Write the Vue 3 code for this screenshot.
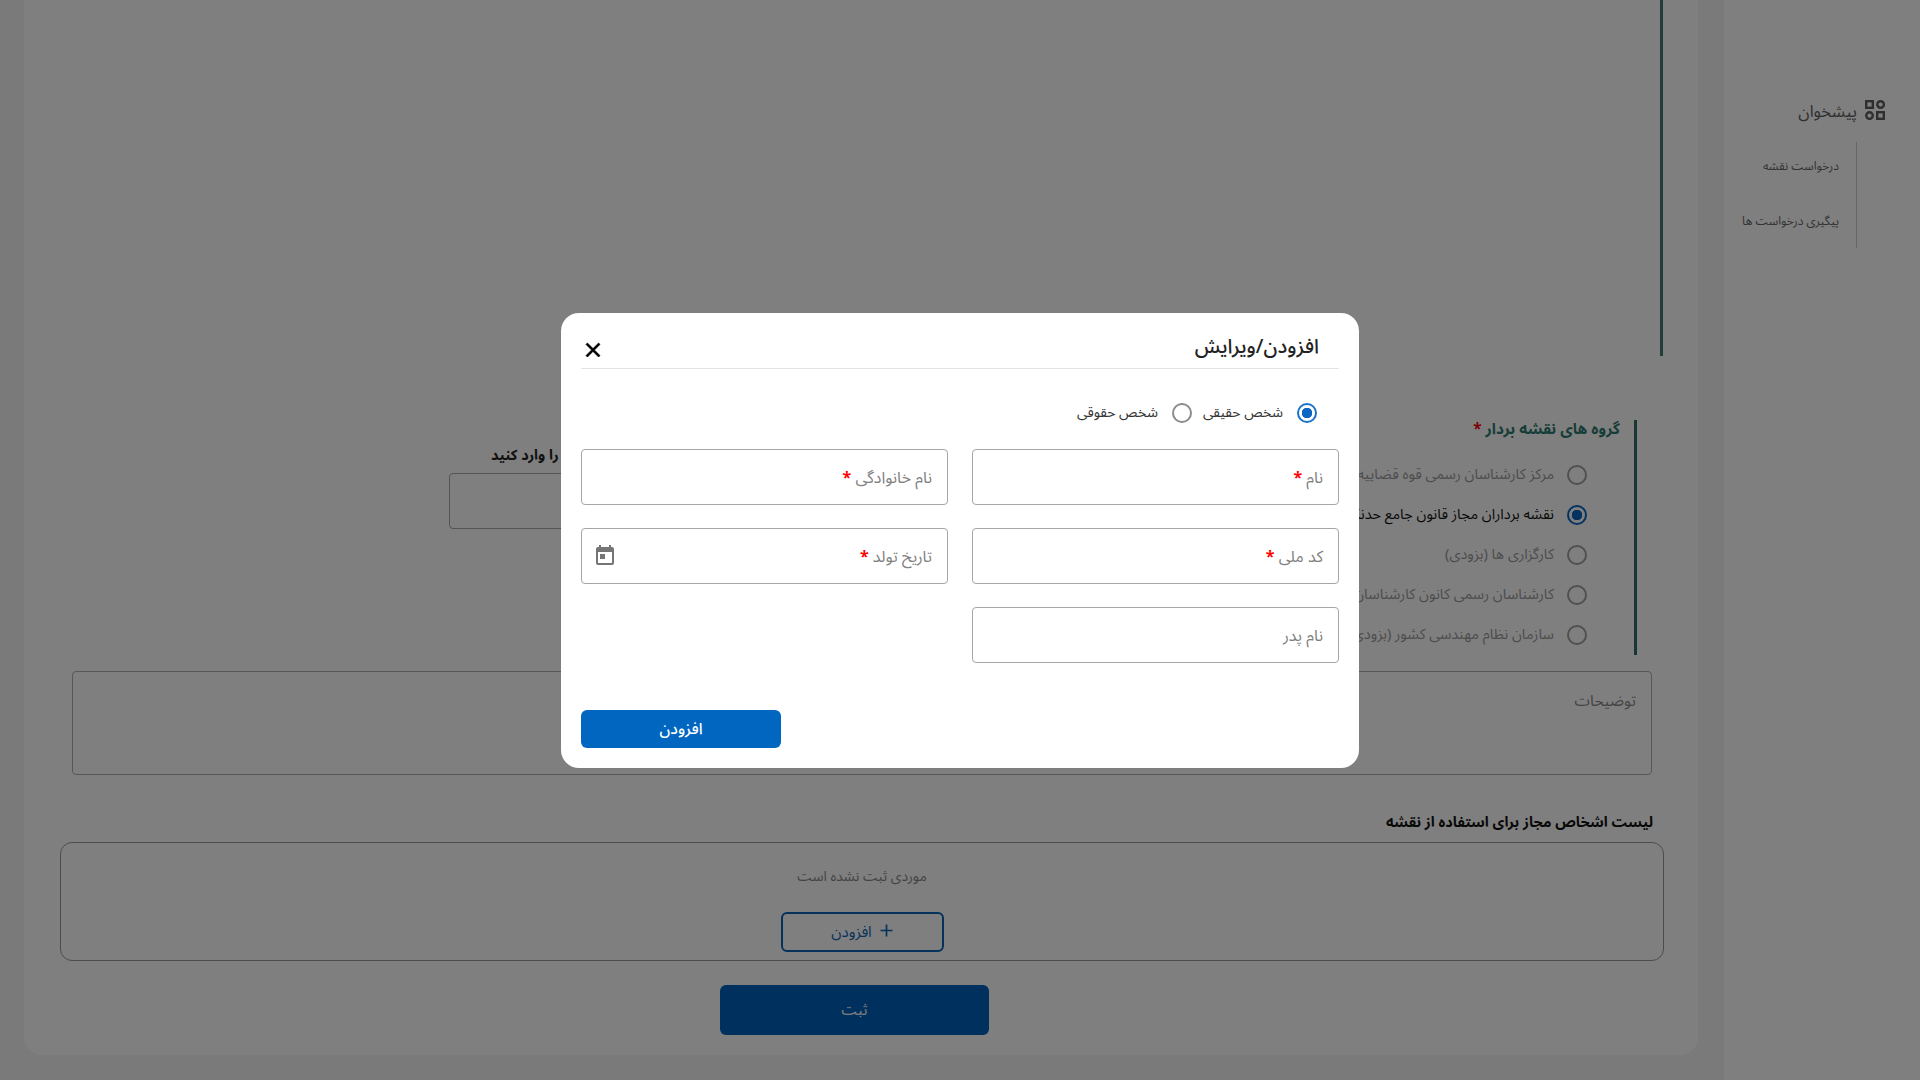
<template>
  <div class="page" dir="rtl">
    <aside class="sidebar">
      <div class="brand">
        <svg class="brand__icon" viewBox="0 0 20 20" width="20" height="20" fill="none" stroke="currentColor" stroke-width="2.4">
          <rect x="1.2" y="1.2" width="6.6" height="6.6" />
          <circle cx="15.6" cy="4.5" r="3.3" />
          <circle cx="4.5" cy="15.6" r="3.3" />
          <rect x="12.2" y="12.2" width="6.6" height="6.6" />
        </svg>
        <span class="brand__text">پیشخوان</span>
      </div>
      <nav class="submenu">
        <a v-for="item in menuItems" :key="item" class="submenu__item">{{ item }}</a>
      </nav>
    </aside>

    <main class="card">
      <div class="map-area"></div>

      <div class="form-row">
        <section class="groups">
          <h3 class="groups__title">گروه های نقشه بردار <em>*</em></h3>
          <div
            v-for="group in groups"
            :key="group.label"
            class="group"
            :class="{ 'group--active': group.active }"
          >
            <span class="radio" :class="{ 'radio--on': group.active }"></span>
            <span class="group__text">{{ group.label }}</span>
          </div>
        </section>
        <div class="code-field">
          <label class="code-field__label">شماره پرونده کار را وارد کنید</label>
          <div class="code-field__box"></div>
        </div>
      </div>

      <div class="notes">توضیحات</div>

      <h3 class="list-title">لیست اشخاص مجاز برای استفاده از نقشه</h3>
      <div class="list-box">
        <p class="list-box__empty">موردی ثبت نشده است</p>
        <button class="btn-outline">
          <svg viewBox="0 0 14 14" width="13" height="13" fill="none" stroke="currentColor" stroke-width="1.8">
            <path d="M7 0.5v13M0.5 7h13" />
          </svg>
          افزودن
        </button>
      </div>

      <button class="btn-submit">ثبت</button>
    </main>

    <div class="overlay">
      <div class="dialog">
        <header class="dialog__head">
          <h2>افزودن/ویرایش</h2>
          <svg class="dialog__close" viewBox="0 0 24 24" width="24" height="24" fill="#000" stroke="#000" stroke-width="0.7">
            <path d="M19 6.41 17.59 5 12 10.59 6.41 5 5 6.41 10.59 12 5 17.59 6.41 19 12 13.41 17.59 19 19 17.59 13.41 12z" />
          </svg>
        </header>

        <div class="person-type">
          <span class="radio radio--on radio--bright"></span>
          <span class="person-type__text">شخص حقیقی</span>
          <span class="radio radio--light"></span>
          <span class="person-type__text">شخص حقوقی</span>
        </div>

        <div class="fields">
          <div v-for="field in fields" :key="field.label" class="field" :class="{ 'field--empty': field.empty }">
            <template v-if="!field.empty">
              <span class="field__label">{{ field.label }} <em v-if="field.required">*</em></span>
              <svg v-if="field.date" viewBox="0 0 24 24" width="24" height="24" fill="#757575">
                <path d="M19 3h-1V1h-2v2H8V1H6v2H5c-1.11 0-1.99.9-1.99 2L3 19c0 1.1.89 2 2 2h14c1.1 0 2-.9 2-2V5c0-1.1-.9-2-2-2zm0 16H5V8h14v11zM7 10h5v5H7z" />
              </svg>
            </template>
          </div>
        </div>

        <button class="btn-primary">افزودن</button>
      </div>
    </div>
  </div>
</template>

<script setup>
const menuItems = ['درخواست نقشه', 'پیگیری درخواست ها']

const groups = [
  { label: 'مرکز کارشناسان رسمی قوه قضاییه' },
  { label: 'نقشه برداران مجاز قانون جامع حدنگار', active: true },
  { label: 'کارگزاری ها (بزودی)' },
  { label: 'کارشناسان رسمی کانون کارشناسان' },
  { label: 'سازمان نظام مهندسی کشور (بزودی)' },
]

const fields = [
  { label: 'نام', required: true },
  { label: 'نام خانوادگی', required: true },
  { label: 'کد ملی', required: true },
  { label: 'تاریخ تولد', required: true, date: true },
  { label: 'نام پدر' },
  { label: '', empty: true },
]
</script>

<style>
html,
body {
  margin: 0;
  overflow: hidden;
}
</style>

<style scoped>
.page {
  display: flex;
  height: 1080px;
  overflow: hidden;
  background: #f5f5f5;
  color: #222;
  font-family: "Noto Sans Arabic", "DejaVu Sans", sans-serif;
}

.sidebar {
  box-sizing: border-box;
  flex: 0 0 196px;
  height: 100%;
  padding: 100px 35px 0 0;
  background: #fff;
}

.brand {
  display: flex;
  align-items: center;
  gap: 8px;
  height: 20px;
  font-size: 16.5px;
  color: #5e5e5e;
}

.brand__icon {
  flex: none;
}

.brand__text {
  padding-top: 2px;
}

.submenu {
  display: flex;
  flex-direction: column;
  gap: 35px;
  height: 106px;
  margin: 22px 28px 0 0;
  padding: 15px 17px 0 0;
  box-sizing: border-box;
  border-right: 1px solid #ccc;
  font-size: 12px;
  color: #666;
  white-space: nowrap;
}

.submenu__item {
  line-height: 20px;
}

.card {
  box-sizing: border-box;
  flex: 0 0 1674px;
  height: 1055px;
  margin-right: 26px;
  padding-right: 34px;
  border-radius: 0 0 18px 18px;
  background: #fff;
}

.map-area {
  height: 356px;
  margin-right: 1px;
  border-right: 3px solid #3f7d74;
}

.form-row {
  display: flex;
  align-items: flex-start;
  margin-top: 64px;
  margin-right: 27px;
}

.groups {
  box-sizing: border-box;
  flex: 0 0 520px;
  height: 235px;
  padding-right: 16px;
  border-right: 3px solid #2f6f6a;
  white-space: nowrap;
}

.groups__title {
  margin: 1px -2px 14px 0;
  height: 20px;
  font-size: 15.3px;
  line-height: 17px;
  font-weight: 700;
  color: #2f7a70;
}

.groups__title em,
.field em {
  font-style: normal;
  font-weight: 700;
  color: #f00;
}

.group {
  display: flex;
  align-items: center;
  gap: 13px;
  height: 40px;
  margin-right: 31px;
  font-size: 14.5px;
  color: #9a9a9a;
}

.group__text {
  padding-bottom: 2px;
}

.group--active {
  color: #111;
}

.radio {
  box-sizing: border-box;
  flex: none;
  width: 20px;
  height: 20px;
  border: 2px solid #a0a0a0;
  border-radius: 50%;
  background: #fff;
}

.radio--on {
  border-color: #0a66c2;
  background: radial-gradient(circle, #0a66c2 0 5px, #fff 5.5px);
}

.radio--bright {
  border-color: #1a73c5;
}

.radio--light {
  border-color: #8c8c8c;
}

.code-field {
  flex: 0 0 668px;
  margin-top: 23px;
}

.code-field__label {
  display: block;
  height: 30px;
  margin-left: 42px;
  padding-top: 1px;
  box-sizing: border-box;
  font-size: 14.5px;
  line-height: 24px;
  font-weight: 700;
  color: #222;
  white-space: nowrap;
  text-align: left;
}

.code-field__box {
  box-sizing: border-box;
  height: 56px;
  border: 1px solid #a8a8a8;
  border-radius: 4px;
}

.notes {
  box-sizing: border-box;
  width: 1580px;
  height: 104px;
  margin: 16px 12px 0 0;
  padding: 18px 15px 0 0;
  border: 1px solid #b0b0b0;
  border-radius: 4px;
  font-size: 15.5px;
  line-height: 22px;
  color: #888;
}

.list-title {
  margin: 38px 11px 9px 0;
  font-size: 14.5px;
  line-height: 20px;
  font-weight: 700;
  color: #111;
}

.list-box {
  box-sizing: border-box;
  display: flex;
  flex-direction: column;
  align-items: center;
  width: 1604px;
  height: 119px;
  padding-top: 24px;
  border: 1px solid #999;
  border-radius: 12px;
}

.list-box__empty {
  margin: 0;
  height: 20px;
  font-size: 14px;
  line-height: 20px;
  color: #888;
}

.btn-outline {
  display: flex;
  align-items: center;
  justify-content: center;
  gap: 8px;
  box-sizing: border-box;
  width: 163px;
  height: 40px;
  margin-top: 25px;
  padding: 0;
  border: 2px solid #0a62b5;
  border-radius: 6px;
  background: none;
  color: #0a62b5;
  font-family: inherit;
  font-size: 15px;
}

.btn-outline svg {
  margin-top: -3px;
}

.btn-submit {
  display: block;
  width: 269px;
  height: 50px;
  margin: 24px 675px 0 0;
  border: 0;
  border-radius: 6px;
  background: #0060bd;
  color: #fff;
  font-family: inherit;
  font-size: 15px;
}

.overlay {
  position: fixed;
  inset: 0;
  display: flex;
  align-items: center;
  justify-content: center;
  background: rgba(0, 0, 0, 0.5);
}

.dialog {
  box-sizing: border-box;
  width: 798px;
  height: 455px;
  padding: 0 20px;
  border-radius: 18px;
  background: #fff;
}

.dialog__head {
  display: flex;
  align-items: center;
  justify-content: space-between;
  box-sizing: border-box;
  height: 56px;
  padding: 14px 20px 0 0;
  border-bottom: 1px solid #e3e3e3;
}

.dialog__head h2 {
  margin: 0;
  font-size: 20px;
  line-height: 26px;
  font-weight: 500;
  color: #222;
}

.dialog__close {
  margin: 6px 0 0 0;
}

.person-type {
  display: flex;
  align-items: center;
  height: 20px;
  margin-top: 34px;
  padding-right: 22px;
  font-size: 14px;
  color: #333;
}

.person-type__text {
  margin-right: 14px;
  margin-left: 11px;
}

.fields {
  display: grid;
  grid-template-columns: 367px 367px;
  grid-auto-rows: 56px;
  gap: 23px 24px;
  margin-top: 26px;
}

.field {
  display: flex;
  align-items: center;
  justify-content: space-between;
  box-sizing: border-box;
  padding: 0 15px;
  border: 1px solid #a6a6a6;
  border-radius: 4px;
  font-size: 16px;
  color: #808080;
}

.field--empty {
  border: 0;
}

.field__label {
  padding-top: 2px;
}

.field svg {
  flex: none;
  margin-left: -4px;
}

.btn-primary {
  display: block;
  width: 200px;
  height: 38px;
  margin-top: 47px;
  margin-right: auto;
  border: 0;
  border-radius: 6px;
  background: #0066bf;
  color: #fff;
  font-family: inherit;
  font-size: 15.5px;
  font-weight: 500;
}
</style>
